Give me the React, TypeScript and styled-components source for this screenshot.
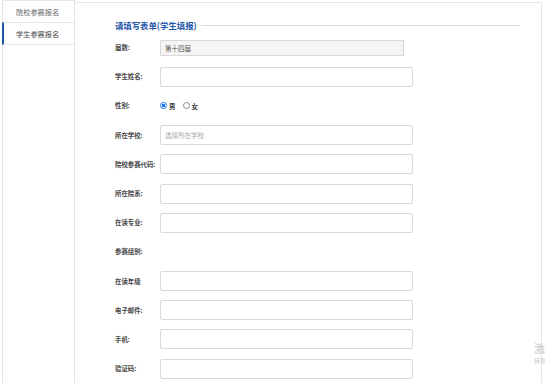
import React, { useState } from 'react';
import styled, { createGlobalStyle } from 'styled-components';

const GlobalStyle = createGlobalStyle`
  html, body {
    margin: 0;
    padding: 0;
    background: #fff;
    overflow: hidden;
  }
  body {
    font-family: "Noto Sans CJK SC", "Liberation Sans", sans-serif;
    color: #333;
  }
`;

const Page = styled.div`
  position: relative;
  display: flex;
  width: 545px;
  height: 383px;
  padding-left: 2px;
  box-sizing: border-box;
`;

const Sidebar = styled.div`
  width: 73px;
  flex-shrink: 0;
  border-left: 1px solid #e3e3e3;
  border-right: 1px solid #e3e3e3;
  box-sizing: border-box;
`;

const Tab = styled.div<{ $active?: boolean }>`
  height: 23px;
  box-sizing: border-box;
  border-top: 1px solid #e6e6e6;
  border-bottom: 1px solid #e6e6e6;
  margin-top: -1px;
  border-left: 2px solid ${p => (p.$active ? '#1d5aa5' : 'transparent')};
  margin-left: -1px;
  padding-left: 12px;
  display: flex;
  align-items: center;
  font-size: 7.2px;
  color: ${p => (p.$active ? '#444' : '#666')};
  &:first-child {
    margin-top: 0;
  }
`;

const Main = styled.div`
  flex: 1;
  margin-top: 2px;
  margin-right: 3px;
  border-top: 1px solid #e6e6e6;
  border-right: 1px solid #e6e6e6;
  padding: 15px 21px 0 40px;
`;

const TitleRow = styled.div`
  display: flex;
  align-items: center;
  gap: 4px;
  height: 14px;
  margin-bottom: 1px;
`;

const Title = styled.span`
  font-size: 8.4px;
  font-weight: 700;
  color: #1f57a8;
  white-space: nowrap;
`;

const TitleLine = styled.div`
  flex: 1;
  height: 1px;
  background: #dcdcdc;
`;

const Row = styled.div`
  display: flex;
  align-items: center;
  height: 29.2px;
`;

const Label = styled.label`
  width: 45px;
  flex-shrink: 0;
  font-size: 6.4px;
  font-weight: 600;
  color: #484848;
  white-space: nowrap;
`;

const Input = styled.input<{ $w?: number }>`
  width: ${p => p.$w ?? 253}px;
  height: 20px;
  box-sizing: border-box;
  border: 1px solid #d9d9d9;
  border-radius: 2px;
  padding: 0 4px;
  font-family: inherit;
  font-size: 6.5px;
  color: #555;
  background: #fff;
  outline: none;
  &:disabled {
    background: #f4f4f4;
    height: 16px;
    border-radius: 0;
    color: #555;
  }
  &::placeholder {
    color: #aaa;
  }
`;

const RadioGroup = styled.div`
  display: flex;
  align-items: center;
  gap: 7px;
`;

const RadioOption = styled.label`
  display: flex;
  align-items: center;
  gap: 2px;
  font-size: 6.5px;
  font-weight: 600;
  color: #444;
`;

const RadioDot = styled.span<{ $checked?: boolean }>`
  width: 7px;
  height: 7px;
  box-sizing: border-box;
  border-radius: 50%;
  border: 1px solid ${p => (p.$checked ? '#1a73e8' : '#888')};
  background: ${p => (p.$checked ? 'radial-gradient(circle, #1a73e8 45%, #fff 55%)' : '#fff')};
`;

const Watermark = styled.div`
  position: absolute;
  left: 534px;
  top: 342px;
  display: flex;
  flex-direction: column;
  gap: 3px;
  color: #c8c8c8;
  white-space: nowrap;
`;

const WatermarkBig = styled.span`
  font-size: 11px;
  line-height: 12px;
`;

const WatermarkSmall = styled.span`
  font-size: 6px;
  line-height: 7px;
`;

const fields = [
  { label: '所在学校:', placeholder: '选择所在学校' },
  { label: '院校参赛代码:' },
  { label: '所在院系:' },
  { label: '在读专业:' },
];

const fieldsAfter = ['在读年级', '电子邮件:', '手机:', '验证码:'];

export default function App() {
  const [gender, setGender] = useState('男');

  return (
    <>
      <GlobalStyle />
      <Page>
        <Sidebar>
          <Tab>院校参赛报名</Tab>
          <Tab $active>学生参赛报名</Tab>
        </Sidebar>
        <Main>
          <TitleRow>
            <Title>请填写表单(学生填报)</Title>
            <TitleLine />
          </TitleRow>
          <Row>
            <Label>届数:</Label>
            <Input $w={244} disabled value="第十四届" readOnly />
          </Row>
          <Row>
            <Label>学生姓名:</Label>
            <Input />
          </Row>
          <Row>
            <Label>性别:</Label>
            <RadioGroup>
              {['男', '女'].map(g => (
                <RadioOption key={g} onClick={() => setGender(g)}>
                  <RadioDot $checked={gender === g} />
                  {g}
                </RadioOption>
              ))}
            </RadioGroup>
          </Row>
          {fields.map(f => (
            <Row key={f.label}>
              <Label>{f.label}</Label>
              <Input placeholder={f.placeholder} />
            </Row>
          ))}
          <Row>
            <Label>参赛组别:</Label>
          </Row>
          {fieldsAfter.map(l => (
            <Row key={l}>
              <Label>{l}</Label>
              <Input />
            </Row>
          ))}
        </Main>
        <Watermark>
          <WatermarkBig>激活</WatermarkBig>
          <WatermarkSmall>转到</WatermarkSmall>
        </Watermark>
      </Page>
    </>
  );
}
